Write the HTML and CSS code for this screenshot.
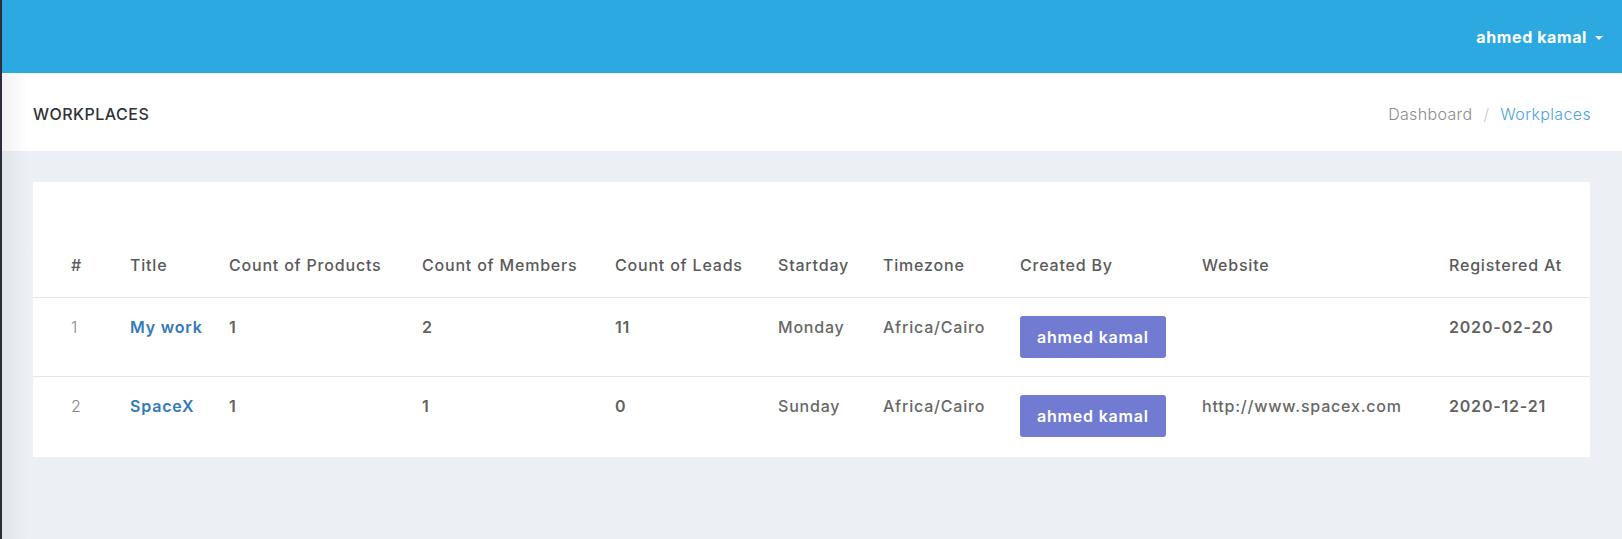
FILE: index.html
```html
<!DOCTYPE html>
<html lang="en">
<head>
<meta charset="utf-8">
<title>Workplaces</title>
<link rel="stylesheet" href="styles.css">
</head>
<body>
<div class="layout">
  <aside class="sidebar"></aside>
  <div class="main">
    <header class="topbar">
      <div class="user-menu">ahmed kamal <span class="caret"></span></div>
    </header>
    <div class="page-title">
      <h1>Workplaces</h1>
      <nav class="breadcrumb">
        <span class="crumb">Dashboard</span>
        <span class="sep">/</span>
        <span class="crumb active">Workplaces</span>
      </nav>
    </div>
    <div class="content">
      <div class="card">
        <table class="table">
          <colgroup>
            <col class="c1"><col class="c2"><col class="c3"><col class="c4"><col class="c5">
            <col class="c6"><col class="c7"><col class="c8"><col class="c9"><col class="c10">
          </colgroup>
          <thead>
            <tr>
              <th>#</th><th>Title</th><th>Count of Products</th><th>Count of Members</th><th>Count of Leads</th>
              <th>Startday</th><th>Timezone</th><th>Created By</th><th>Website</th><th>Registered At</th>
            </tr>
          </thead>
          <tbody>
            <tr>
              <td class="num">1</td>
              <td><a class="link" href="#">My work</a></td>
              <td class="strong">1</td>
              <td class="strong">2</td>
              <td class="strong">11</td>
              <td>Monday</td>
              <td>Africa/Cairo</td>
              <td><span class="badge">ahmed kamal</span></td>
              <td></td>
              <td class="strong">2020-02-20</td>
            </tr>
            <tr>
              <td class="num">2</td>
              <td><a class="link" href="#">SpaceX</a></td>
              <td class="strong">1</td>
              <td class="strong">1</td>
              <td class="strong">0</td>
              <td>Sunday</td>
              <td>Africa/Cairo</td>
              <td><span class="badge">ahmed kamal</span></td>
              <td>http://www.spacex.com</td>
              <td class="strong">2020-12-21</td>
            </tr>
          </tbody>
        </table>
      </div>
    </div>
  </div>
</div>
</body>
</html>
```

FILE: styles.css
```css
* { box-sizing: border-box; }
html, body { margin: 0; padding: 0; }
body {
  font-family: Inter, "Noto Sans", sans-serif;
  background: #ecf0f4;
  color: #5f5f5f;
  height: 539px;
  overflow: hidden;
}
.layout { display: flex; min-height: 539px; }
.sidebar { width: 2px; background: #2b2e3a; flex: none; }
.main { flex: 1; position: relative; display: flex; flex-direction: column; }
.main::before {
  content: "";
  position: absolute;
  left: 0; top: 73px; bottom: 0;
  width: 26px;
  background: linear-gradient(to right, rgba(0,0,0,0.05), rgba(0,0,0,0));
  pointer-events: none;
  z-index: 2;
}
.topbar {
  height: 73px;
  background: #2ca9e1;
  display: flex;
  align-items: center;
  justify-content: flex-end;
  padding-right: 19px;
}
.user-menu {
  color: #fff;
  font-weight: 700;
  font-size: 16px;
  letter-spacing: 0.6px;
  display: flex;
  align-items: center;
  gap: 8px;
}
.caret {
  width: 0; height: 0;
  border-left: 4px solid transparent;
  border-right: 4px solid transparent;
  border-top: 4px solid #fff;
  margin-top: 2px;
}
.page-title {
  height: 78px;
  background: #fff;
  display: flex;
  align-items: center;
  justify-content: space-between;
  padding: 0 31px 0 31px;
}
.page-title h1 {
  margin: 0;
  font-size: 16px;
  font-weight: 500;
  text-transform: uppercase;
  color: #2f3237;
  letter-spacing: 0.5px;
  padding-top: 4px;
}
.breadcrumb {
  display: flex;
  gap: 11px;
  font-size: 16px;
  font-weight: 300;
  letter-spacing: 0.35px;
  padding-top: 4px;
}
.crumb { color: #8c8c8c; }
.sep { color: #c9c9c9; }
.crumb.active { color: #4ba3dd; }
.content { padding: 31px 32px 0 31px; }
.card { background: #fff; padding: 51px 0 2px; }
.table {
  width: 100%;
  border-collapse: collapse;
  table-layout: fixed;
  font-size: 16px;
  letter-spacing: 0.8px;
}
.c1 { width: 85px; } .c2 { width: 99px; } .c3 { width: 193px; } .c4 { width: 193px; }
.c5 { width: 163px; } .c6 { width: 105px; } .c7 { width: 137px; } .c8 { width: 182px; }
.c9 { width: 247px; } .c10 { width: 153px; }
.table th {
  text-align: left;
  font-weight: 500;
  color: #5a5a5a;
  padding: 20px 0 20px 12px;
  line-height: 24px;
  white-space: nowrap;
  border-bottom: 1px solid #e3e6ea;
}
.table td {
  vertical-align: top;
  padding: 17px 0 19px 12px;
  line-height: 24px;
  font-weight: 500;
  color: #676767;
  white-space: nowrap;
}
.table td .badge { margin-top: 1px; margin-bottom: -1px; }
.table th:first-child, .table td:first-child { padding-left: 38px; }
.table tbody tr + tr td { border-top: 1px solid #e3e6ea; }
.table td.num { font-weight: 300; color: #888; }
.table td.strong { font-weight: 600; color: #626262; }
.link { color: #3479b8; text-decoration: none; font-weight: 600; }
.badge {
  display: inline-block;
  background: #707bd1;
  color: #fff;
  font-weight: 600;
  padding: 9px 17px;
  border-radius: 3px;
  line-height: 24px;
}
```
